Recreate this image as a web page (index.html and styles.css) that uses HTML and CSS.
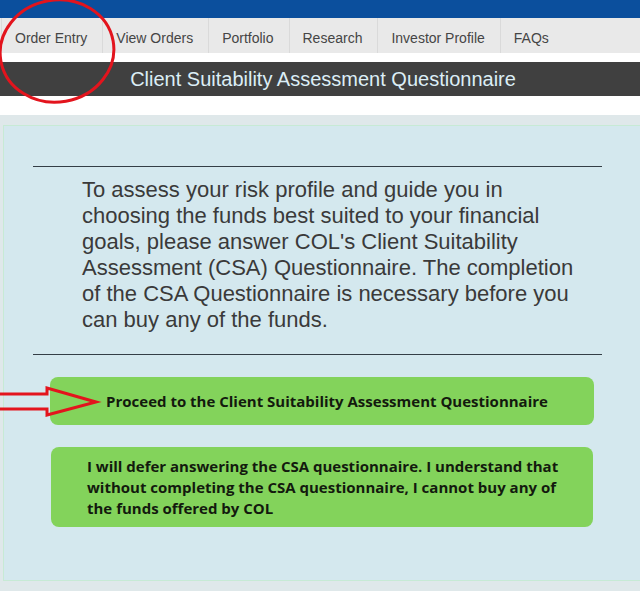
FILE: index.html
```html
<!DOCTYPE html>
<html lang="en">
<head>
    <meta charset="UTF-8">
    <meta name="viewport" content="width=device-width, initial-scale=1.0">
    <title>Client Suitability Assessment Questionnaire</title>
    <link rel="stylesheet" href="styles.css">
</head>
<body>

    <div class="topbar"></div>

    <nav class="tabs">
        <a class="tab" href="#">Order Entry</a>
        <a class="tab" href="#">View Orders</a>
        <a class="tab" href="#">Portfolio</a>
        <a class="tab" href="#">Research</a>
        <a class="tab" href="#">Investor Profile</a>
        <a class="tab" href="#">FAQs</a>
    </nav>

    <h1 class="title">Client Suitability Assessment Questionnaire</h1>

    <div class="panel-wrap">
        <div class="panel">
            <hr class="rule">
            <p class="intro">To assess your risk profile and guide you in choosing the funds best suited to your financial goals, please answer COL's Client Suitability Assessment (CSA) Questionnaire. The completion of the CSA Questionnaire is necessary before you can buy any of the funds.</p>
            <hr class="rule">

            <a class="choice choice-main" href="#">Proceed to the Client Suitability Assessment Questionnaire</a>
            <a class="choice choice-defer" href="#">I will defer answering the CSA questionnaire. I understand that<br>without completing the CSA questionnaire, I cannot buy any of<br>the funds offered by COL</a>
        </div>
    </div>

    <!-- marcas em vermelho por cima da tela -->
    <svg class="marks" width="640" height="591" viewBox="0 0 640 591">
        <ellipse cx="57" cy="51" rx="57" ry="51" transform="rotate(-10 57 51)" fill="none" stroke="#e3141d" stroke-width="3"/>
        <polygon points="-4,394 47,394 47,388 96,402 47,415 47,409 -4,409" fill="none" stroke="#e3141d" stroke-width="3" stroke-linejoin="miter"/>
    </svg>

</body>
</html>
```

FILE: styles.css
```css
body {
    margin: 0;
    font-family: 'Liberation Sans', Arial, sans-serif;
    background: #fff;
    position: relative;
    overflow: hidden;
}

.topbar {
    height: 18px;
    background-color: #0b4f9d;
}

.tabs {
    display: flex;
    height: 35px;
    padding-left: 1px;
    background-color: #e9e9e9;
}

.tab {
    display: block;
    padding: 5px 15px 0 13px;
    line-height: 30px;
    font-size: 14px;
    color: #454545;
    text-decoration: none;
    border-left: 1px solid #dadada;
}

.title {
    margin: 9px 0 0;
    height: 34px;
    padding-left: 6px;
    line-height: 34px;
    background-color: #404040;
    color: #dceef6;
    font-size: 20px;
    font-weight: normal;
    text-align: center;
}

.panel-wrap {
    margin-top: 19px;
    padding: 10px 0 10px 3px;
    background-color: #dfe8ea;
}

.panel {
    padding-top: 40px;
    box-sizing: border-box;
    height: 456px;
    border: 1px solid #c7ead5;
    border-right: none;
    background-color: #d4e8ee;
}

.rule {
    margin: 0 38px 0 29px;
    border: none;
    border-top: 1px solid #343e46;
}

.intro {
    margin: 10px 58px 21px 78px;
    font-size: 22px;
    line-height: 26px;
    color: #3a3a3a;
}

.choice {
    display: block;
    margin-left: 46px;
    width: 544px;
    border-radius: 8px;
    background-color: #83d35b;
    color: #131a0e;
    font-family: 'Open Sans', Lato, sans-serif;
    font-weight: bold;
    font-size: 15px;
    text-decoration: none;
}

.choice-main {
    margin-top: 22px;
    height: 48px;
    line-height: 48px;
    padding-left: 10px;
    box-sizing: border-box;
    text-align: center;
}

.choice-defer {
    margin-top: 22px;
    margin-left: 47px;
    width: 542px;
    padding: 9px 0 8px 36px;
    box-sizing: border-box;
    height: 80px;
    line-height: 21px;
}

.marks {
    position: absolute;
    top: 0;
    left: 0;
    pointer-events: none;
}
```
